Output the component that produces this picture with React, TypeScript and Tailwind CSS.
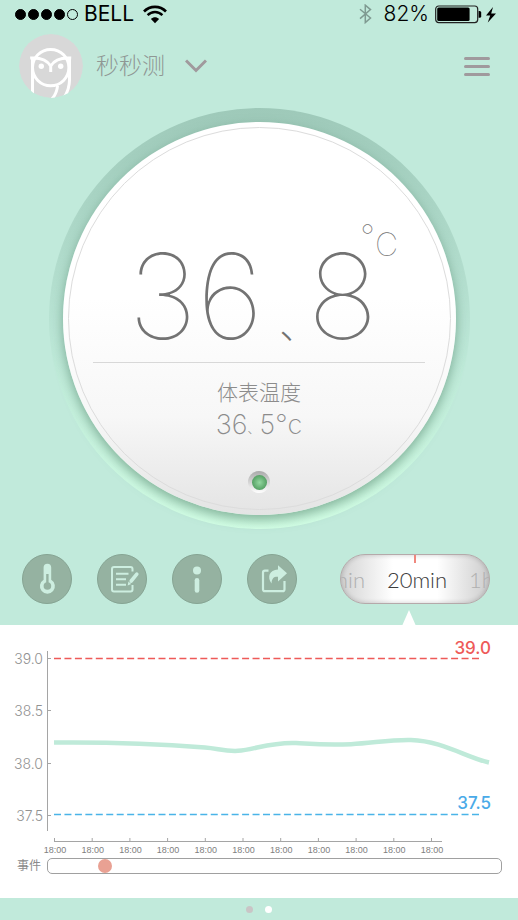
import React, { useState } from 'react';
import clsx from 'clsx';

const TIME_LABELS = Array.from({ length: 11 }, () => '18:00');

const Y_TICKS = [
  { label: '39.0', y: 33 },
  { label: '38.5', y: 85 },
  { label: '38.0', y: 138 },
  { label: '37.5', y: 190 }
];

const EVENTS = [{ id: 1, position: 12.5 }];

const StatusBar: React.FC = () => (
  <div className="flex h-7 items-center justify-between pl-[15px] pr-[21px] text-black">
    <div className="flex items-center">
      <div className="flex gap-[2px]">
        {[1, 2, 3, 4, 5].map(n => (
          <span
            key={n}
            className={clsx('h-[11px] w-[11px] rounded-full border border-black', n < 5 && 'bg-black')}
          />
        ))}
      </div>
      <span className="ml-[6px] font-['Inter',sans-serif] text-[21px] leading-7">BELL</span>
      <svg className="ml-[9px]" width="24" height="19" viewBox="0 0 24 19" fill="none" stroke="currentColor">
        <path d="M1 6.5C7 .3 17 .3 23 6.5" strokeWidth="2.6" />
        <path d="M4.6 10.2c4.2-4.2 10.6-4.2 14.8 0" strokeWidth="2.4" />
        <path d="M12 18.2 7.9 14c2.4-2.2 5.8-2.2 8.2 0z" fill="currentColor" stroke="none" />
      </svg>
    </div>

    <div className="flex items-center">
      <svg width="13" height="20" viewBox="0 0 13 20" fill="none" stroke="#7f9a91" strokeWidth="1.5">
        <path d="M1 5.2 11.5 14 6.3 18.6V1.2L11.5 5.6 1 14.6" />
      </svg>
      <span className="ml-3 font-['Inter',sans-serif] text-[21px] font-light leading-7">82%</span>
      <svg className="ml-[6px]" width="62" height="19" viewBox="0 0 62 19">
        <rect x=".7" y="1" width="42" height="16.6" rx="3" fill="none" stroke="#222" strokeWidth="1.2" />
        <rect x="2.2" y="2.6" width="32.4" height="13.4" rx="1.5" fill="#000" />
        <path d="M43.6 6h1q1.6 0 1.6 1.6v3.6q0 1.6-1.6 1.6h-1z" fill="#000" />
        <path d="M58 2 51 10.6h4.2l-2.4 7 8.2-9.2h-4.8z" fill="#000" />
      </svg>
    </div>
  </div>
);

const OwlAvatar: React.FC = () => (
  <svg className="h-16 w-16 overflow-hidden rounded-full" viewBox="0 0 64 64" fill="none" stroke="#fff" strokeWidth="3">
    <circle cx="32" cy="32" r="32" fill="#d8d8d8" stroke="none" />
    <circle cx="31.7" cy="33.6" r="18.2" />
    <path d="M11.2 24c9-.6 16.6 1.2 20.5 8 3.9-6.8 11.5-8.6 20.5-8M31.7 31v7" />
    <path d="M13.5 25v38M50.500 25v21c0 8-2.500 13-5.500 18M38.500 52c-.5 6-2.500 9.500-5.500 13" />
    <circle cx="22.3" cy="32.3" r="2.7" fill="#fff" stroke="none" />
    <circle cx="41.7" cy="32.3" r="2.7" fill="#fff" stroke="none" />
  </svg>
);

const Header: React.FC = () => (
  <header className="mt-[6px] flex h-16 items-center justify-between pl-[19px] pr-7">
    <button type="button" className="flex items-center">
      <OwlAvatar />
      <span className="ml-[13px] text-[23px] font-light text-[#8f9794]">秒秒测</span>
      <svg className="ml-5" width="22" height="14" viewBox="0 0 22 14" fill="none" stroke="#a09a9d" strokeWidth="3">
        <path d="M1 1.5 11 11.5 21 1.5" />
      </svg>
    </button>
    <button type="button" aria-label="菜单" className="flex flex-col gap-[5px]">
      <span className="h-[3px] w-[26px] rounded-full bg-[#a09a9d]" />
      <span className="h-[3px] w-[26px] rounded-full bg-[#a09a9d]" />
      <span className="h-[3px] w-[26px] rounded-full bg-[#a09a9d]" />
    </button>
  </header>
);

const Dial: React.FC = () => (
  <div className="mx-auto mt-[10px] aspect-square w-full max-w-[421px] rounded-full bg-linear-to-b from-[#9ec9b9] via-[#bbe6d6] via-55% to-[#d3ffe6] p-[14px]">
    <div className="h-full w-full rounded-full bg-linear-to-b from-white from-45% via-[#f7f7f7] via-75% to-[#e4e4e4] p-[5px] shadow-[0_5px_12px_rgba(70,120,95,0.55)]">
      <div className="flex h-full w-full flex-col items-center rounded-full border border-[#dcdcdc] pt-[94px] font-['Inter','Noto_Sans_CJK_SC',sans-serif] font-thin text-[#737373]">
        <div className="flex w-[278px] items-start justify-end text-[32px] leading-[30px]">
          <span>°</span>
          <span className="pt-2">C</span>
        </div>
        <div className="-mt-[7px] flex items-baseline pr-3 text-[118px] leading-[86px]">
          <span>36</span>
          <span className="-mr-2 ml-4 text-4xl font-light leading-8">、</span>
          <span>8</span>
        </div>
        <hr className="mt-5 w-[332px] border-[#d8d8d8]" />
        <p className="mt-[14px] text-[21px] font-light leading-8 text-[#8c8c8c]">体表温度</p>
        <p className="flex h-8 items-baseline text-[27px] font-extralight leading-8 text-[#8c8c8c]">
          36<span className="text-xs">、</span>5°c
        </p>
        <span className="mt-[30px] flex h-[22px] w-[22px] items-center justify-center rounded-full bg-linear-to-b from-[#aaa] to-white">
          <span className="h-[15px] w-[15px] rounded-full bg-radial from-[#93d8a0] to-[#3a8a4c]" />
        </span>
      </div>
    </div>
  </div>
);

interface RoundButtonProps {
  label: string;
  children: React.ReactNode;
}

const RoundButton: React.FC<RoundButtonProps> = ({ label, children }) => (
  <button
    type="button"
    aria-label={label}
    className="h-[50px] w-[50px] rounded-full border border-[#86a493] bg-[#95b2a1] text-[#cdeee0]"
  >
    <svg viewBox="1 1 48 48" fill="none" stroke="currentColor" strokeWidth="2">
      {children}
    </svg>
  </button>
);

const DurationPicker: React.FC = () => {
  const [duration, setDuration] = useState('20min');

  return (
    <div className="relative flex h-[50px] w-[150px] items-center justify-between overflow-hidden rounded-full border border-[#b5a9aa] bg-[linear-gradient(90deg,#d4d4d4,#fff_35%,#fff_65%,#cdcdcd)] font-['Lato',sans-serif] text-[22px] font-light text-[#b0b0b0] shadow-[inset_0_0_5px_rgba(0,0,0,0.2)]">
      <button type="button" className="flex w-6 justify-end" onClick={() => setDuration('10min')}>
        min
      </button>
      <span className="text-[#3c3c3c]">{duration}</span>
      <button type="button" className="w-5 whitespace-nowrap text-left" onClick={() => setDuration('1h')}>
        1h
      </button>
      <span className="absolute left-1/2 top-0 h-2 w-[2px] -translate-x-1/2 bg-[#f0887e]" />
    </div>
  );
};

const Toolbar: React.FC = () => (
  <div className="mt-[25px] flex items-center justify-between pl-[22px] pr-7">
    <div className="flex gap-[25px]">
      <RoundButton label="体温">
        <path
          d="M21.6 13.5a3.8 3.8 0 0 1 7.6 0v12.3a7.5 7.5 0 1 1-7.6 0z"
          fill="currentColor"
          stroke="none"
        />
        <path d="M25.4 20v9" stroke="#95b2a1" strokeWidth="2.4" />
        <circle cx="25.4" cy="32" r="3.8" fill="#95b2a1" stroke="none" />
      </RoundButton>
      <RoundButton label="记录">
        <path d="M35.5 17.5V15q0-2-2-2H17q-2 0-2 2v20.500q0 2 2 2h16.500q2 0 2-2V31" />
        <path d="M19 19.7h12.500M19 25.300h10M19 30.700h10" />
        <path d="M39.8 20.2 34.2 27" strokeWidth="3.6" strokeLinecap="round" />
        <path d="m31.400 27.600 2.800 2.400-3.500 1.500z" fill="currentColor" stroke="none" />
      </RoundButton>
      <RoundButton label="信息">
        <circle cx="25" cy="16.5" r="4" fill="currentColor" stroke="none" />
        <path d="M25 26.2v10.3" strokeWidth="4.6" strokeLinecap="round" />
      </RoundButton>
      <RoundButton label="分享">
        <path d="M21.5 16.7H18q-2 0-2 2v16.500q0 2 2 2h17.500q2 0 2-2V27" strokeWidth="2.2" />
        <path
          d="M31 11.2 40 19.3 31 27.5v-4.7c-4.5-.2-6 1.600-6.500 6.700-4.600-6.500-2.300-13.600 6.500-14z"
          fill="currentColor"
          stroke="none"
        />
      </RoundButton>
    </div>
    <DurationPicker />
  </div>
);

const TemperatureChart: React.FC = () => (
  <svg className="block w-full font-['Inter',sans-serif]" viewBox="0 0 518 232" fill="none">
    {/* 坐标轴 */}
    <path d="M47.5 26v180M54 216.5h388" stroke="#a5a5a5" />
    {Y_TICKS.map(tick => (
      <g key={tick.label}>
        <path d={`M47 ${tick.y + 0.5}h4`} stroke="#a5a5a5" />
        <text x="43" y={tick.y + 6} textAnchor="end" className="fill-[#929292] text-sm font-light">
          {tick.label}
        </text>
      </g>
    ))}
    {TIME_LABELS.map((label, index) => (
      <g key={index}>
        <path d={`M${54.5 + index * 37.7} 213v4`} stroke="#a5a5a5" />
        <text
          x={55 + index * 37.7}
          y="228"
          textAnchor="middle"
          className="fill-[#808080] font-['Liberation_Sans',sans-serif] text-[9px]"
        >
          {label}
        </text>
      </g>
    ))}

    {/* 上下限 */}
    <path d="M54 33.5h427" stroke="#ee5a58" strokeWidth="1.5" strokeDasharray="7 3.45" />
    <path d="M54 189.5h427" stroke="#4ab4e8" strokeWidth="1.5" strokeDasharray="7 3.45" />
    <text x="491" y="29" textAnchor="end" className="fill-[#ee5a58] text-[17px] font-medium">39.0</text>
    <text x="491" y="184" textAnchor="end" className="fill-[#4aaae8] text-[17px] font-medium">37.5</text>

    {/* 体温曲线 */}
    <path
      d="M54 117.5C100 117 160 119 205 122.5c13 1 20 4 33 3.3 16-1 33-9 58-7.8 17 1 30 2.5 55 1.2 22-1 38-4.7 60-4.2 32 1 54 17 78 22.5"
      stroke="#bfead9"
      strokeWidth="4.5"
    />
  </svg>
);

const EventTimeline: React.FC = () => (
  <div className="flex items-center gap-[6px] pb-[23px] pl-[17px] pr-4">
    <span className="text-xs leading-[18px] text-[#8a8a8a]">事件</span>
    <div className="relative h-4 flex-1 rounded-[5px] border border-[#a0a0a0]">
      {EVENTS.map(event => (
        <button
          key={event.id}
          type="button"
          aria-label="事件"
          className="absolute top-0 h-[14px] w-[14px] -translate-x-1/2 rounded-full bg-[#e9a193]"
          style={{ left: `${event.position}%` }}
        />
      ))}
    </div>
  </div>
);

const App: React.FC = () => (
  <div className="flex min-h-screen flex-col bg-[#c1eadb] font-['Liberation_Sans','Noto_Sans_CJK_SC',sans-serif]">
    <StatusBar />
    <Header />
    <main>
      <Dial />
      <Toolbar />
      <section className="relative mt-[21px] bg-white">
        <svg className="absolute -top-[15px] right-[102px]" width="14" height="16" viewBox="0 0 14 16">
          <path d="M7 0 14 16H0z" fill="#fff" />
        </svg>
        <TemperatureChart />
        <EventTimeline />
      </section>
    </main>
    <footer className="flex h-[22px] items-center justify-center gap-3">
      <span className="h-[7px] w-[7px] rounded-full bg-[#c9c5c6]" />
      <span className="h-[7px] w-[7px] rounded-full bg-white" />
    </footer>
  </div>
);

export default App;
